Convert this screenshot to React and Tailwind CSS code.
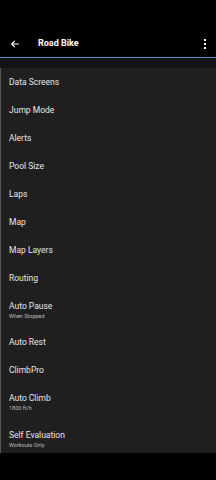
import React from 'react';

const items = [
  { title: 'Data Screens' },
  { title: 'Jump Mode' },
  { title: 'Alerts' },
  { title: 'Pool Size' },
  { title: 'Laps' },
  { title: 'Map' },
  { title: 'Map Layers' },
  { title: 'Routing' },
  { title: 'Auto Pause', sub: 'When Stopped', h: 'h-[36px]' },
  { title: 'Auto Rest' },
  { title: 'ClimbPro' },
  { title: 'Auto Climb', sub: '1800 ft/h', h: 'h-[37px]' },
  { title: 'Self Evaluation', sub: 'Workouts Only', h: 'h-[32px]' },
];

export default function App() {
  return (
    <div className="w-[216px] h-[480px] bg-black flex flex-col overflow-hidden" style={{ fontFamily: 'Roboto, "Liberation Sans", sans-serif' }}>
      <div className="h-[57px] flex items-end pb-[7px]">
        <div className="flex items-center w-full h-[12px]">
          <svg width="10" height="10" viewBox="0 0 24 24" className="ml-[10px]" fill="none" stroke="#fff" strokeWidth="2.6" strokeLinecap="round" strokeLinejoin="round">
            <path d="M20 12H4M11 5l-7 7 7 7" />
          </svg>
          <span className="ml-[18px] text-[9px] font-bold text-white">Road Bike</span>
          <div className="ml-auto mr-[10px] flex flex-col gap-[2px]">
            <span className="w-[2px] h-[2px] bg-white" />
            <span className="w-[2px] h-[2px] bg-white" />
            <span className="w-[2px] h-[2px] bg-white" />
          </div>
        </div>
      </div>
      <div className="h-[1px] bg-[#5b8cd2]" />
      <div className="h-[10px] bg-[#141414]" />
      <div className="bg-[#1f1f1f] border-l border-[#555] flex flex-col">
        {items.map((it, i) =>
          it.sub ? (
            <div key={i} className={`flex flex-col pl-[8px] pt-[9px] ${it.h}`}>
              <span className="text-[8.5px] leading-[11px] text-[#e6e6e6]">{it.title}</span>
              <span className="text-[5.5px] leading-[8px] text-[#bdbdbd]">{it.sub}</span>
            </div>
          ) : (
            <div key={i} className="flex items-center pl-[8px] h-[28px]">
              <span className="text-[8.5px] leading-[11px] text-[#e6e6e6]">{it.title}</span>
            </div>
          )
        )}
      </div>
    </div>
  );
}
